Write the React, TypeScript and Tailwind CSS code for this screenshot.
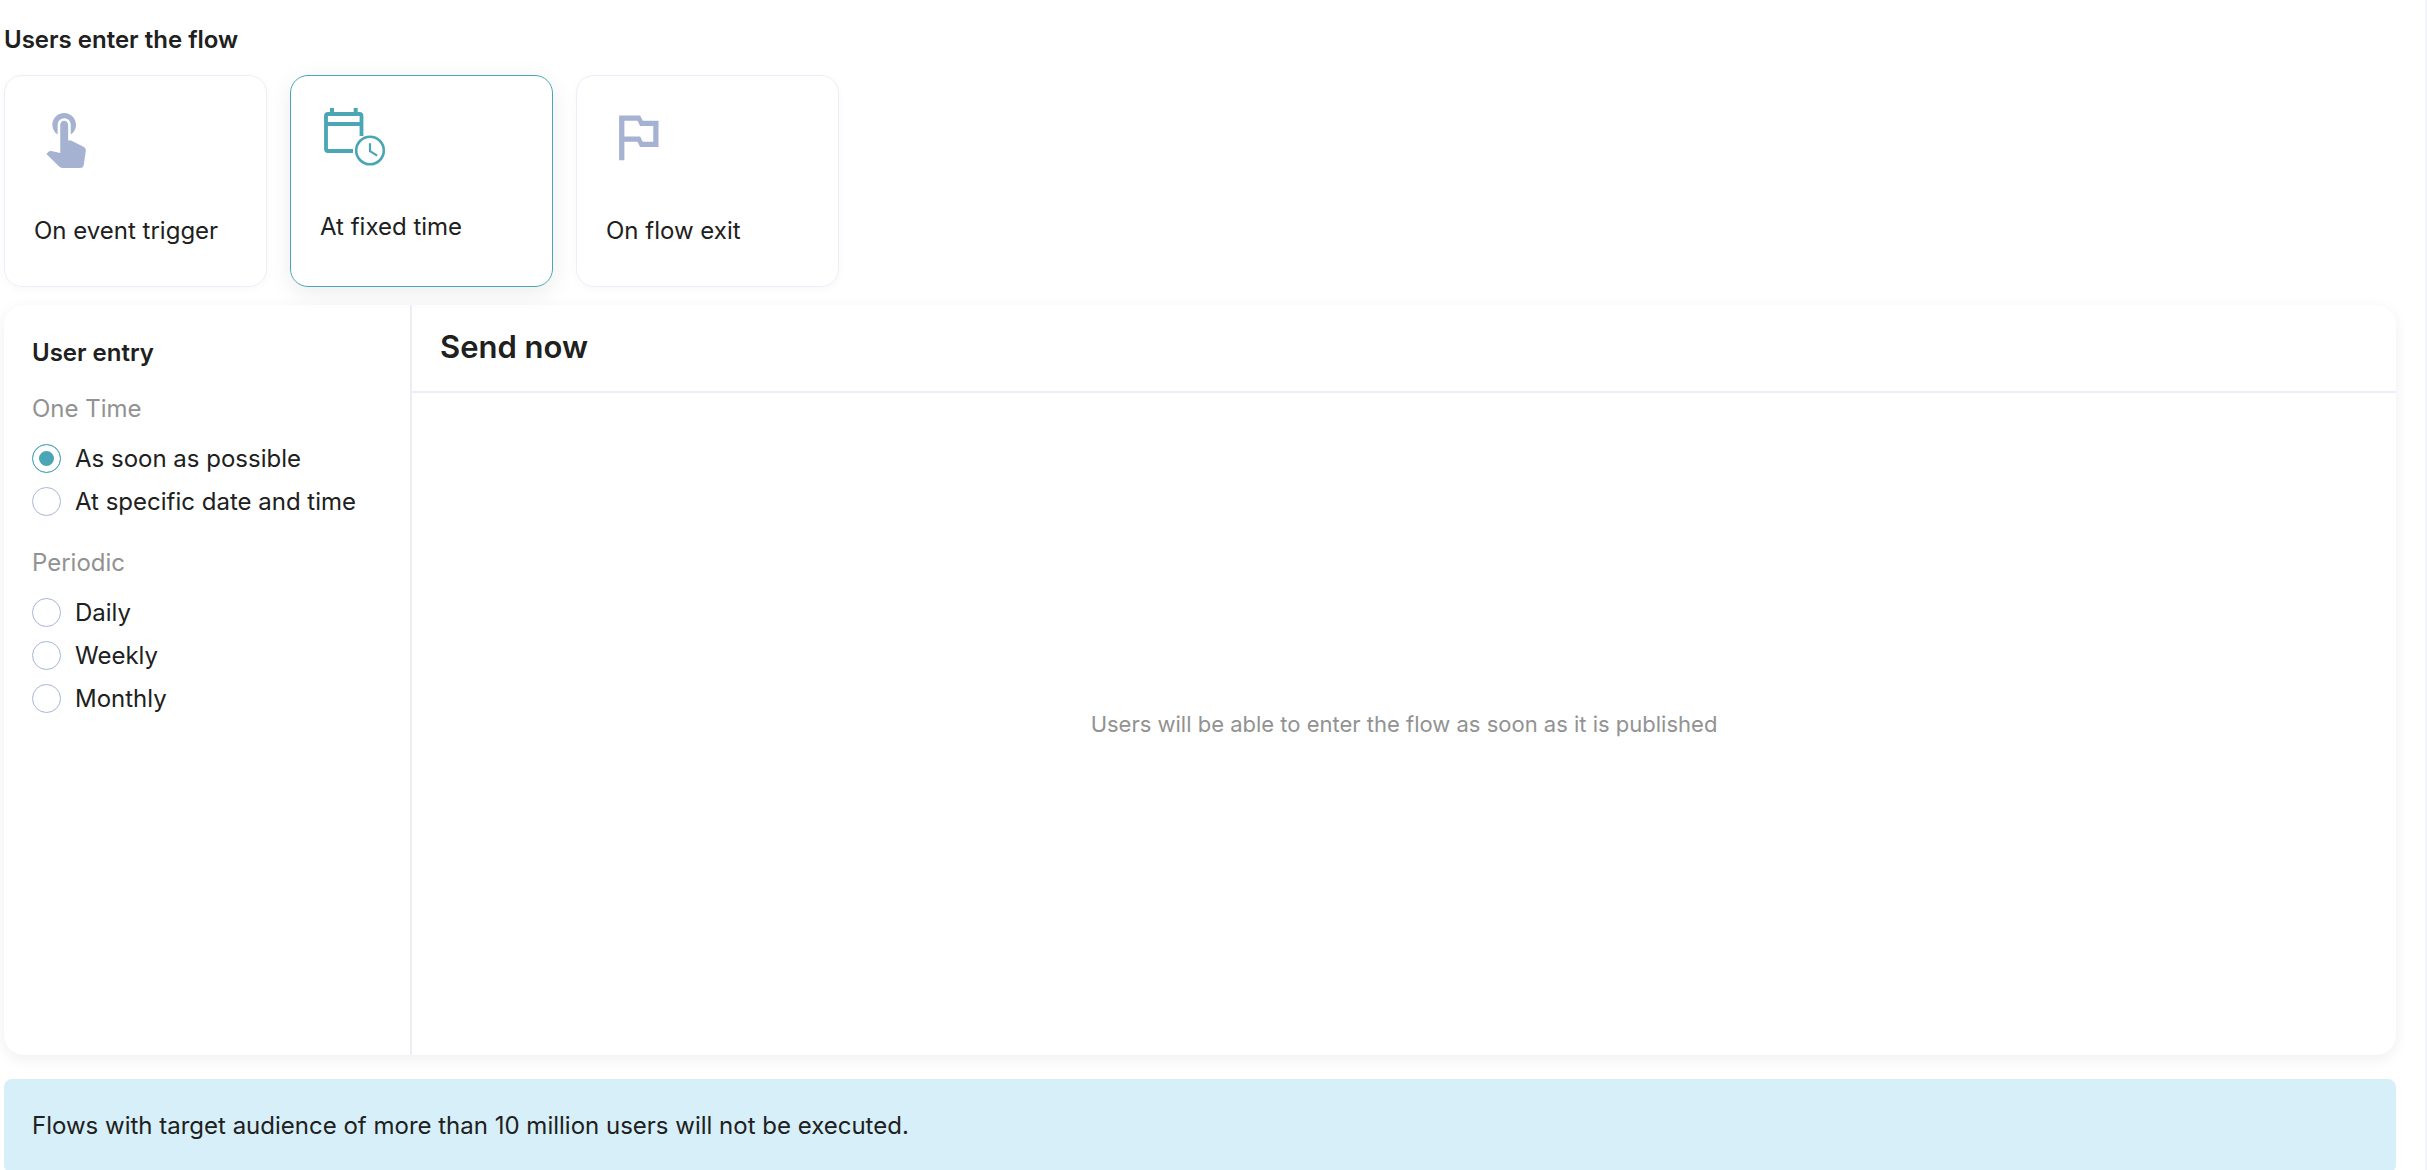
import { useState } from "react";

function TouchIcon() {
  return (
    <svg viewBox="0 0 24 24" className="size-[63px] fill-[#a5b2d2]" aria-hidden="true">
      <path d="M9 11.24V7.5a2.5 2.5 0 0 1 5 0v3.74c1.21-.81 2-2.18 2-3.74C16 5.01 13.99 3 11.5 3S7 5.01 7 7.5c0 1.56.79 2.93 2 3.74zm9.84 4.63l-4.54-2.26c-.17-.07-.35-.11-.54-.11H13v-6c0-.83-.67-1.5-1.5-1.5S10 6.67 10 7.5v10.74l-3.43-.72c-.08-.01-.15-.03-.24-.03-.31 0-.59.13-.79.33l-.79.8 4.94 4.94c.27.27.65.44 1.06.44h6.79c.75 0 1.33-.55 1.44-1.28l.75-5.27c.01-.07.02-.14.02-.2 0-.62-.38-1.16-.91-1.38z" />
    </svg>
  );
}

function CalendarClockIcon() {
  return (
    <svg viewBox="0 0 68 59" className="h-[59px] w-[68px] overflow-visible" fill="none" stroke="#4aa5b5" aria-hidden="true">
      <path d="M41.5 31V11a2 2 0 0 0-2-2H8a2 2 0 0 0-2 2v33a2 2 0 0 0 2 2H33" strokeWidth="3.8" />
      <path d="M6 19H41.5M12 3v5M35.7 3v5" strokeWidth="4" />
      <circle cx="50" cy="45.500" r="13.8" strokeWidth="2.6" />
      <path d="M50 38.3V46.2L57.2 50.6" strokeWidth="2.2" />
    </svg>
  );
}

function FlagIcon() {
  return (
    <svg viewBox="0 0 24 24" className="size-[63px] fill-[#a5b2d2]" aria-hidden="true">
      <path d="M14 6l-1-2H5v17h2v-7h5l1 2h7V6h-6zm4 8h-4l-1-2H7V6h5l1 2h5v6z" />
    </svg>
  );
}

const triggers = [
  { label: "On event trigger", Icon: TouchIcon },
  { label: "At fixed time", Icon: CalendarClockIcon },
  { label: "On flow exit", Icon: FlagIcon },
];

const groups = [
  { title: "One Time", options: ["As soon as possible", "At specific date and time"] },
  { title: "Periodic", options: ["Daily", "Weekly", "Monthly"] },
];

export default function App() {
  const [trigger, setTrigger] = useState("At fixed time");
  const [entry, setEntry] = useState("As soon as possible");

  return (
    <main className="min-h-screen border-r-2 border-[#f3f3fa] bg-white pt-6 pr-[29px] pl-1 font-['Inter',sans-serif] text-2xl/8 text-[#202020]">
      <h1 className="font-semibold">Users enter the flow</h1>

      <div className="mt-[19px] flex gap-[23px]">
        {triggers.map(({ label, Icon }) => (
          <button
            key={label}
            type="button"
            aria-pressed={trigger === label}
            onClick={() => setTrigger(label)}
            className={`flex w-[263px] flex-col items-start gap-[47px] rounded-[18px] border px-[29px] pt-[29px] pb-[39px] text-left ${
              trigger === label
                ? "border-[#4aa5b5] shadow-[0_6px_24px_rgba(0,0,0,0.08)]"
                : "border-[#ecedf8] shadow-[0_2px_10px_rgba(0,0,0,0.03)]"
            }`}
          >
            <Icon />
            <span>{label}</span>
          </button>
        ))}
      </div>

      <section className="mt-[18px] flex min-h-[750px] overflow-clip rounded-[20px] bg-white shadow-[0_4px_14px_rgba(50,50,93,0.08)]">
        <div className="w-[408px] shrink-0 border-r-2 border-[#ecedf8] px-7 pt-8">
          <h2 className="font-semibold">User entry</h2>
          {groups.map((group) => (
            <fieldset key={group.title} className="mt-6">
              <legend className="mb-3 text-[#929292]">{group.title}</legend>
              {group.options.map((option) => (
                <label key={option} className="flex h-[43px] items-center gap-[14px]">
                  <input
                    type="radio"
                    name="entry"
                    checked={entry === option}
                    onChange={() => setEntry(option)}
                    className="size-[29px] shrink-0 appearance-none rounded-full border border-[#a9b5d6] checked:border-[#4aa5b5] checked:bg-[#4aa5b5] checked:shadow-[inset_0_0_0_6px_white]"
                  />
                  <span>{option}</span>
                </label>
              ))}
            </fieldset>
          ))}
        </div>
        <div className="flex grow flex-col">
          <h2 className="border-b-2 border-[#ecedf8] px-7 pt-[22px] pb-6 text-[31px]/10 font-semibold">Send now</h2>
          <p className="flex grow items-center justify-center text-[22px] text-[#929292]">
            Users will be able to enter the flow as soon as it is published
          </p>
        </div>
      </section>

      <p className="mt-6 rounded-lg bg-[#d6eff9] px-7 py-[31px]">
        Flows with target audience of more than 10 million users will not be executed.
      </p>
    </main>
  );
}
